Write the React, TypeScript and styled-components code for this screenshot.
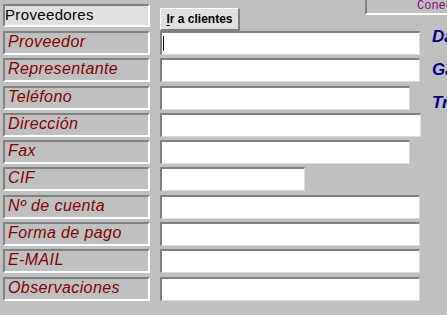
import { Fragment } from 'react';
import styled, { createGlobalStyle } from 'styled-components';

const GlobalStyle = createGlobalStyle`
    html, body {
        margin: 0;
        padding: 0;
        background: #c0c0c0;
    }
    body {
        width: 447px;
        height: 315px;
        overflow: hidden;
        font-family: "Liberation Sans", Arial, sans-serif;
    }
`;

const Page = styled.div`
    width: 447px;
    height: 315px;
    overflow: hidden;
    background: #c0c0c0;
`;

const Header = styled.div`
    display: flex;
    align-items: flex-start;
    height: 31px;
    padding-left: 3px;
`;

const TitleBox = styled.div`
    box-sizing: border-box;
    width: 147px;
    height: 23px;
    margin-top: 4px;
    background: #e0e0e0;
    border: 2px solid;
    border-color: #808080 #fff #fff #808080;
    font-size: 15px;
    line-height: 18px;
    letter-spacing: 0.35px;
    color: #000;
`;

const GoButton = styled.button`
    box-sizing: border-box;
    width: 80px;
    height: 23px;
    margin: 8px 0 0 10px;
    padding: 0;
    background: #e0e0e0;
    border-style: solid;
    border-width: 1px 2px 2px 1px;
    border-color: #fff #808080 #808080 #fff;
    font-family: "Liberation Sans", Arial, sans-serif;
    font-size: 12px;
    font-weight: bold;
    color: #000;
    text-align: center;

    u { text-decoration-thickness: 1px; text-underline-offset: 2px; }
`;

const StatusPanel = styled.div`
    box-sizing: border-box;
    flex-shrink: 0;
    width: 86px;
    height: 15px;
    margin-left: auto;
    margin-right: -4px;
    padding-left: 50px;
    border-left: 2px solid #808080;
    border-bottom: 2px solid #fff;
    overflow: hidden;
    white-space: nowrap;
    font-family: "Liberation Mono", "Courier New", monospace;
    font-size: 12px;
    line-height: 12px;
    color: #800080;
`;

const Body = styled.div`
    display: flex;
    align-items: flex-start;
    padding-left: 3px;
`;

const Rows = styled.div`
    display: grid;
    grid-template-columns: 147px auto;
    column-gap: 10px;
    row-gap: 3.3px;
    width: 417px;
    flex-shrink: 0;
`;

const Label = styled.div`
    box-sizing: border-box;
    height: 24px;
    padding-left: 3px;
    border: 2px solid;
    border-color: #808080 #fff #fff #808080;
    font-size: 16px;
    line-height: 18px;
    font-style: italic;
    letter-spacing: 0.4px;
    color: #800000;
    white-space: nowrap;
`;

const Field = styled.div<{ $width: number }>`
    box-sizing: border-box;
    width: ${p => p.$width}px;
    height: 24px;
    padding: 2px 0 0 1px;
    background: #fff;
    border-style: solid;
    border-width: 2px 1px 1px 2px;
    border-color: #808080 #dcdcdc #dcdcdc #808080;
`;

const Caret = styled.span`
    display: block;
    width: 1px;
    height: 15px;
    margin-top: 1px;
    background: #000;
`;

const Links = styled.div`
    display: flex;
    flex-direction: column;
    margin: -11px 0 0 12px;
    white-space: nowrap;
`;

const LinkText = styled.div`
    font-size: 17px;
    line-height: 33px;
    font-weight: bold;
    font-style: italic;
    color: #000080;
`;

const fields: { label: string; width: number }[] = [
    { label: 'Proveedor', width: 260 },
    { label: 'Representante', width: 260 },
    { label: 'Teléfono', width: 250 },
    { label: 'Dirección', width: 261 },
    { label: 'Fax', width: 250 },
    { label: 'CIF', width: 145 },
    { label: 'Nº de cuenta', width: 260 },
    { label: 'Forma de pago', width: 260 },
    { label: 'E-MAIL', width: 260 },
    { label: 'Observaciones', width: 260 },
];

const App = (): JSX.Element => (
    <Page>
        <GlobalStyle />
        <Header>
            <TitleBox>Proveedores</TitleBox>
            <GoButton>
                <u>I</u>r a clientes
            </GoButton>
            <StatusPanel>Conectado</StatusPanel>
        </Header>
        <Body>
            <Rows>
                {fields.map((f, i) => (
                    <Fragment key={f.label}>
                        <Label>{f.label}</Label>
                        <Field $width={f.width}>
                            {i === 0 && <Caret />}
                        </Field>
                    </Fragment>
                ))}
            </Rows>
            <Links>
                <LinkText>Datos bancarios</LinkText>
                <LinkText>Gastos</LinkText>
                <LinkText>Transportistas</LinkText>
            </Links>
        </Body>
    </Page>
);

export default App;
